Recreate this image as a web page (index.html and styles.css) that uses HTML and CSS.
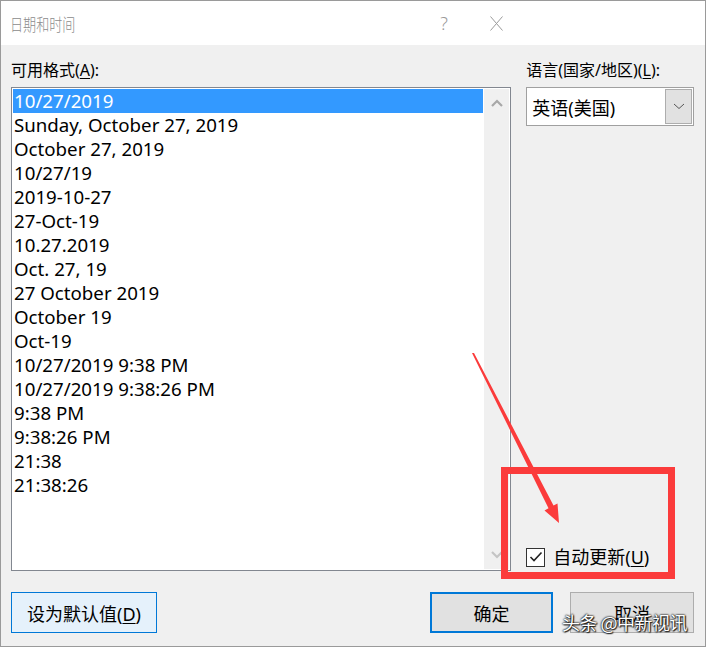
FILE: index.html
```html
<!DOCTYPE html>
<html lang="zh-CN">
<head>
    <meta charset="UTF-8">
    <title>日期和时间</title>
    <link rel="stylesheet" href="styles.css">
</head>
<body>
    <div class="window">
        <div class="titlebar">
            <span class="title">日期和时间</span>
            <span class="help">?</span>
            <svg class="close" width="13" height="15" viewBox="0 0 13 15">
                <path d="M0.5 0.5 L12.5 14.5 M12.5 0.5 L0.5 14.5" stroke="#9a9a9a" stroke-width="1" fill="none"/>
            </svg>
        </div>

        <div class="content">
            <div class="left-col">
                <div class="label">可用格式(<u>A</u>):</div>
                <div class="listbox">
                    <div class="items">
                        <div class="item selected">10/27/2019</div>
                        <div class="item">Sunday, October 27, 2019</div>
                        <div class="item">October 27, 2019</div>
                        <div class="item">10/27/19</div>
                        <div class="item">2019-10-27</div>
                        <div class="item">27-Oct-19</div>
                        <div class="item">10.27.2019</div>
                        <div class="item">Oct. 27, 19</div>
                        <div class="item">27 October 2019</div>
                        <div class="item">October 19</div>
                        <div class="item">Oct-19</div>
                        <div class="item">10/27/2019 9:38 PM</div>
                        <div class="item">10/27/2019 9:38:26 PM</div>
                        <div class="item">9:38 PM</div>
                        <div class="item">9:38:26 PM</div>
                        <div class="item">21:38</div>
                        <div class="item">21:38:26</div>
                    </div>
                    <div class="scrollbar">
                        <svg width="12" height="8" viewBox="0 0 12 8">
                            <path d="M1 7 L6 2 L11 7" stroke="#a8a8a8" stroke-width="2.2" fill="none"/>
                        </svg>
                        <svg width="12" height="8" viewBox="0 0 12 8">
                            <path d="M1 1 L6 6 L11 1" stroke="#c4c4c4" stroke-width="2.2" fill="none"/>
                        </svg>
                    </div>
                </div>
            </div>

            <div class="right-col">
                <div class="label">语言(国家/地区)(<u>L</u>):</div>
                <div class="select">
                    <span class="select-value">英语(美国)</span>
                    <span class="select-btn">
                        <svg width="12" height="7" viewBox="0 0 12 7">
                            <path d="M1 1 L6 5.5 L11 1" stroke="#555" stroke-width="1" fill="none"/>
                        </svg>
                    </span>
                </div>
                <label class="check">
                    <span class="check-box">
                        <svg width="14" height="12" viewBox="0 0 14 12">
                            <path d="M1.5 6 L5 9.5 L12.5 1.5" stroke="#222" stroke-width="1.6" fill="none"/>
                        </svg>
                    </span>
                    <span>自动更新(<u>U</u>)</span>
                </label>
            </div>
        </div>

        <div class="buttons">
            <button class="btn btn-default">设为默认值(<u>D</u>)</button>
            <div class="spacer"></div>
            <button class="btn btn-ok">确定</button>
            <button class="btn">取消</button>
        </div>

        <div class="mark-box"></div>
        <svg class="mark-arrow" width="706" height="647" viewBox="0 0 706 647">
            <polygon points="472,353 474,353 553.5,505.5 557.5,503.5 559,523 544.5,510.5 548.5,508.2" fill="#fb3b3b"/>
        </svg>
        <div class="watermark">头条 @中新视讯</div>
    </div>
</body>
</html>
```

FILE: styles.css
```css
body {
    margin: 0;
    font-family: "Noto Sans", "Noto Sans CJK SC", sans-serif;
    color: #000;
}
u {
    text-decoration: underline;
    text-underline-offset: 2px;
}
.window {
    position: relative;
    width: 706px;
    height: 647px;
    box-sizing: border-box;
    border: 1px solid #9a9a9a;
    background-color: #f0f0f0;
    overflow: hidden;
}
.titlebar {
    height: 44px;
    background-color: #fff;
    display: flex;
    align-items: center;
}
.title {
    display: inline-block;
    width: 66px;
    margin-left: 9px;
    font-family: "Noto Sans CJK SC", sans-serif;
    font-size: 17px;
    font-weight: 300;
    white-space: nowrap;
    color: #8c8c8c;
    transform: scaleX(0.77);
    transform-origin: left center;
}
.help {
    margin-left: auto;
    margin-right: 42px;
    font-size: 18px;
    font-weight: 300;
    color: #9a9a9a;
}
.close {
    margin-right: 202px;
}
.content {
    display: flex;
    gap: 15px;
    padding: 14px 11px 0 10px;
}
.left-col {
    width: 501px;
}
.right-col {
    width: 168px;
    display: flex;
    flex-direction: column;
}
.label {
    font-size: 16px;
    line-height: 22px;
    height: 22px;
    margin-bottom: 6px;
}
.listbox {
    height: 484px;
    box-sizing: border-box;
    border: 1px solid #828790;
    padding: 1px;
    background-color: #fff;
    display: flex;
}
.items {
    flex: 1;
}
.item {
    height: 24px;
    line-height: 24px;
    padding-left: 1px;
    font-size: 18.7px;
    white-space: nowrap;
}
.item.selected {
    background-color: #3399ff;
    color: #fff;
    margin-right: 1px;
}
.scrollbar {
    width: 25px;
    background-color: #f0f0f0;
    display: flex;
    flex-direction: column;
    align-items: center;
    justify-content: space-between;
    padding: 10px 0 10px;
}
.select {
    height: 39px;
    box-sizing: border-box;
    border: 1px solid #a0a0a0;
    background-color: #fff;
    display: flex;
    align-items: center;
    padding: 1px;
}
.select-value {
    flex: 1;
    padding-left: 4px;
    font-size: 18px;
}
.select-btn {
    width: 27px;
    height: 35px;
    box-sizing: border-box;
    border: 1px solid #adadad;
    background-color: #e1e1e1;
    display: flex;
    align-items: center;
    justify-content: center;
}
.check {
    margin-top: auto;
    margin-bottom: 3px;
    display: flex;
    align-items: center;
    gap: 8px;
    font-size: 18px;
    line-height: 22px;
}
.check-box {
    width: 19px;
    height: 19px;
    box-sizing: border-box;
    border: 1px solid #333;
    background-color: #fff;
    display: flex;
    align-items: center;
    justify-content: center;
}
.buttons {
    display: flex;
    gap: 17px;
    padding: 21px 11px 0 10px;
}
.spacer {
    flex: 1;
}
.btn {
    height: 41px;
    width: 124px;
    box-sizing: border-box;
    border: 1px solid #adadad;
    background-color: #e1e1e1;
    font-family: "Noto Sans", "Noto Sans CJK SC", sans-serif;
    font-size: 18px;
    color: #000;
    padding: 0;
}
.btn-default {
    width: 146px;
    border-color: #0078d7;
    background-color: #e5f1fb;
}
.btn-ok {
    width: 123px;
    border: 2px solid #0078d7;
}
.mark-box {
    position: absolute;
    left: 500px;
    top: 466px;
    width: 174px;
    height: 112px;
    box-sizing: border-box;
    border: 7px solid #fb3b3b;
}
.mark-arrow {
    position: absolute;
    left: -1px;
    top: -1px;
}
.watermark {
    position: absolute;
    left: 561px;
    top: 608px;
    font-family: "Noto Sans CJK SC", sans-serif;
    font-size: 18px;
    color: #fff;
    text-shadow: 0 0 2px #000, 0 0 2px #000, 1px 1px 1px #333;
    letter-spacing: -0.5px;
}
```
